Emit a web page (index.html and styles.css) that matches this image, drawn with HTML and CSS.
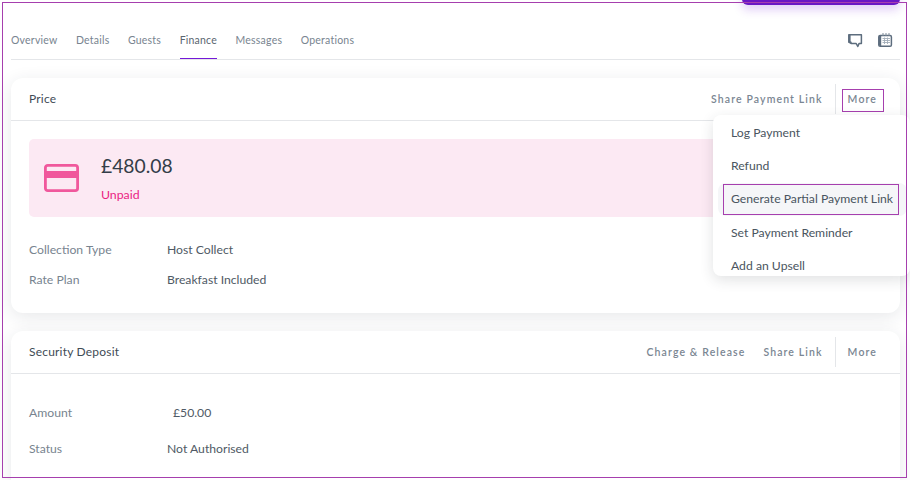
FILE: index.html
```html
<!DOCTYPE html>
<html lang="en">
<head>
<meta charset="utf-8">
<title>Finance</title>
<link rel="stylesheet" href="styles.css">
</head>
<body>
<div class="topbtn"></div>
<main class="page">
  <nav class="tabs">
    <a class="tab">Overview</a>
    <a class="tab">Details</a>
    <a class="tab">Guests</a>
    <a class="tab active">Finance</a>
    <a class="tab">Messages</a>
    <a class="tab">Operations</a>
    <div class="tab-icons">
      <svg class="ico" viewBox="0 0 15 15" width="15" height="15"><path d="M.8 1.8h12.6v8.8H11l-1.2 2.9-1.6-2.9H3.4L.8 9.2z" fill="none" stroke="#5d6d7e" stroke-width="1.5" stroke-linejoin="round"/><path d="M.8 2v7.2l2.6 1.4.4-1.6-1.2-.8V2z" fill="#5d6d7e"/></svg>
      <svg class="ico" viewBox="0 0 15 15" width="15" height="15"><rect x=".8" y="2.6" width="12.6" height="10.6" rx="1.3" fill="none" stroke="#5d6d7e" stroke-width="1.5"/><path d="M.8 3.2v9.2l2.4.8V2.6z" fill="#5d6d7e"/><path d="M5 0v3M8 0v3M11 0v3" stroke="#7e8c9a" stroke-width="1"/><path d="M4.5 5.5h7.5M4.5 7.5h7.5M4.5 9.5h7.5M6.5 4.5v6.5M9.5 4.5v6.5" stroke="#a3aeb9" stroke-width=".9"/></svg>
    </div>
  </nav>

  <section class="card card-price">
    <header class="card-head">
      <h2 class="card-title">Price</h2>
      <div class="actions">
        <a class="act">Share Payment Link</a>
        <a class="act more focus">More</a>
      </div>
    </header>
    <div class="card-body">
      <div class="banner">
        <svg class="card-ico" viewBox="0 0 35 28" width="35" height="28"><rect x="1.4" y="1.4" width="32.2" height="25.2" rx="2.4" fill="none" stroke="#f0589c" stroke-width="2.8"/><rect x="1.4" y="7" width="32.2" height="7" fill="#f0589c"/></svg>
        <div class="banner-text">
          <div class="amount">£480.08</div>
          <div class="status">Unpaid</div>
        </div>
      </div>
      <dl class="rows rows-price">
        <div class="row"><dt>Collection Type</dt><dd>Host Collect</dd></div>
        <div class="row"><dt>Rate Plan</dt><dd>Breakfast Included</dd></div>
      </dl>
    </div>
    <div class="menu">
      <a class="menu-item">Log Payment</a>
      <a class="menu-item">Refund</a>
      <a class="menu-item hover">Generate Partial Payment Link<span class="outline"></span></a>
      <a class="menu-item">Set Payment Reminder</a>
      <a class="menu-item">Add an Upsell</a>
    </div>
  </section>

  <section class="card card-deposit">
    <header class="card-head">
      <h2 class="card-title">Security Deposit</h2>
      <div class="actions">
        <a class="act">Charge &amp; Release</a>
        <a class="act">Share Link</a>
        <a class="act more">More</a>
      </div>
    </header>
    <dl class="rows rows-deposit">
      <div class="row"><dt>Amount</dt><dd class="indent">£50.00</dd></div>
      <div class="row"><dt>Status</dt><dd>Not Authorised</dd></div>
    </dl>
  </section>
</main>
<div class="frame"></div>
</body>
</html>
```
FILE: styles.css
```css
* { box-sizing: border-box; }
html, body { margin: 0; height: 100%; }
body {
  width: 910px; height: 480px; overflow: hidden; background: #fff;
  font-family: "Lato", "Noto Sans", sans-serif; font-size: 13px; color: #4a5560;
  position: relative;
}
.frame { position: absolute; left: 2px; top: 2px; width: 905px; height: 476px; border: 1px solid #a63fae; pointer-events: none; }
.topbtn {
  position: absolute; left: 742px; top: -10px; width: 158px; height: 15px;
  background: #6a16c4; border-radius: 0 0 6px 6px;
  box-shadow: 0 5px 10px rgba(122, 40, 220, .22);
}
.page { padding: 21px 10px 0 11px; }
.tabs { display: flex; height: 39px; border-bottom: 1px solid #e4e6e9; align-items: flex-start; }
.tab { color: #78848f; font-size: 10.5px; letter-spacing: .22px; padding-top: 13px; margin-right: 18.5px; border-bottom: 1px solid transparent; height: 38px; }
.tab.active { color: #5a6570; border-bottom-color: #7419d8; }
.tab-icons { margin-left: auto; display: flex; gap: 15px; padding: 12px 7px 0 0; }
.ico { display: block; }
.card { background: #fff; border-radius: 12px; box-shadow: 0 4px 18px rgba(40, 50, 60, .11); position: relative; }
.card-price { margin-top: 18px; height: 235px; }
.card-deposit { margin-top: 18px; height: 160px; }
.card-head { height: 43px; border-bottom: 1px solid #e4e6e9; display: flex; align-items: center; justify-content: space-between; padding: 0 0 0 18px; }
.card-title { margin: 0 0 2px; font-size: 12px; font-weight: 400; color: #414b55; letter-spacing: .2px; }
.actions { display: flex; align-items: center; height: 100%; }
.act { color: #7a8692; font-size: 10.5px; font-weight: 600; letter-spacing: 1.11px; margin-right: 18px; }
.act.more { height: 30px; border-left: 1px solid #e4e6e9; margin-right: 23px; margin-left: -6px; padding-left: 12px; line-height: 30px; position: relative; }
.act.focus::after { content: ""; position: absolute; left: 6px; top: 5px; width: 40px; height: 21px; border: 1px solid #a63fae; }
.card-body { padding: 18px 18px 0; }
.banner { height: 78px; background: #fce9f3; border-radius: 5px; display: flex; align-items: flex-start; padding: 25px 0 0 15px; }
.card-ico { display: block; }
.banner-text { margin: -10px 0 0 22px; }
.amount { font-size: 19.3px; color: #333d48; line-height: 24px; }
.status { font-size: 12.3px; color: #ea1e82; margin-top: 9px; line-height: 16px; }
.rows { margin: 0; }
.rows-price { padding-top: 18px; margin-top: -1px; }
.rows-deposit { padding: 20px 18px 0; }
.row { display: flex; height: 30px; align-items: center; font-size: 12.2px; }
.rows-deposit .row { height: 36px; }
.row dt { width: 138px; color: #78848f; }
.row dd { margin: 0; color: #4f5a65; }
.row dd.indent { padding-left: 6px; }
.menu {
  position: absolute; left: 702px; top: 37px; width: 197px; height: 161px; overflow: hidden;
  background: #fff; border-radius: 8px; box-shadow: 0 4px 14px rgba(40, 50, 60, .14); padding-top: 1px;
}
.menu-item { display: block; height: 33.25px; line-height: 33px; padding-left: 18px; font-size: 12.2px; color: #4a5560; white-space: nowrap; position: relative; }
.menu-item.hover { background: #f5f6f8; margin: 0 3px 0 5px; padding-left: 13px; border-radius: 8px; line-height: 31px; }
.outline { position: absolute; left: 5px; top: 1px; width: 176px; height: 31px; border: 1px solid #a63fae; }
```
